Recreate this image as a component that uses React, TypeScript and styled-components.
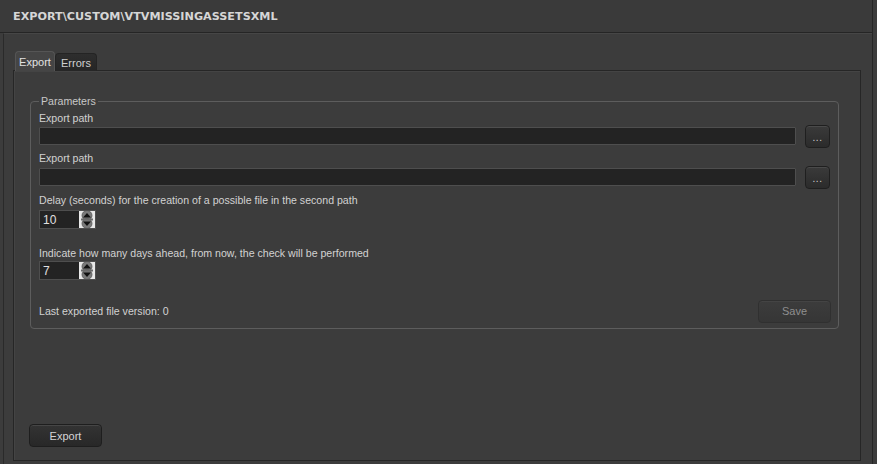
import React from "react";
import styled, { createGlobalStyle } from "styled-components";

const Global = createGlobalStyle`
  html, body { margin: 0; padding: 0; background: #3b3b3b; }
  #root { width: 877px; height: 464px; }
  * { box-sizing: border-box; }
`;

const Window = styled.div`
  width: 877px;
  height: 464px;
  display: flex;
  flex-direction: column;
  background: #3c3c3c;
  font-family: "Liberation Sans", Arial, sans-serif;
  font-size: 10.6px;
  color: #cfcfcf;
  border-right: 4px solid #3c3c3c;
  position: relative;
  &::after {
    content: "";
    position: absolute;
    top: 0;
    bottom: 0;
    right: 0;
    width: 1px;
    background: #262626;
  }
`;

const Header = styled.div`
  height: 33px;
  flex: none;
  display: flex;
  align-items: center;
  padding-left: 13px;
  border-bottom: 1px solid #252525;
  background: #3a3a3a;
  font-family: "DejaVu Sans", Verdana, sans-serif;
  font-weight: bold;
  font-size: 11.2px;
  color: #d6d6d6;
  padding-top: 1px;
`;

const Frame = styled.div`
  flex: 1;
  margin-left: 3px;
  border-left: 1px solid #2a2a2a;
  border-top: 1px solid #464646;
  padding: 17px 12px 3px 9px;
  display: flex;
  flex-direction: column;
`;

const TabBar = styled.div`
  display: flex;
  align-items: flex-end;
  height: 20px;
  padding-left: 2px;
  position: relative;
  z-index: 1;
  margin-bottom: -1px;
`;

const Tab = styled.div<{ $active?: boolean }>`
  height: ${(p) => (p.$active ? 20 : 18)}px;
  width: ${(p) => (p.$active ? 40 : 42)}px;
  display: flex;
  align-items: center;
  justify-content: center;
  border-radius: 4px 4px 0 0;
  border: 1px solid ${(p) => (p.$active ? "#555555" : "#242424")};
  border-bottom: ${(p) => (p.$active ? "none" : "1px solid #262626")};
  background: ${(p) =>
    p.$active ? "#454545" : "linear-gradient(#2e2e2e, #262626)"};
  color: ${(p) => (p.$active ? "#e2e2e2" : "#d0d0d0")};
  font-size: 11px;
  padding-top: ${(p) => (p.$active ? 0 : 1)}px;
`;

const Panel = styled.div`
  flex: 1;
  border: 1px solid #262626;
  box-shadow: inset 1px 1px 0 #444444;
  padding: 14px 21px 13px 16px;
  display: flex;
  flex-direction: column;
`;

const Group = styled.div`
  margin-top: 16px;
  border: 1px solid #5d5d5d;
  border-radius: 4px;
  padding: 10px 7px 6px 8px;
  position: relative;
  display: flex;
  flex-direction: column;
`;

const Legend = styled.span`
  position: absolute;
  top: -8px;
  left: 8px;
  padding: 0 2px;
  background: #3c3c3c;
  color: #c8c8c8;
  line-height: 14px;
`;

const Label = styled.div<{ $mt?: number }>`
  line-height: 13px;
  margin-top: ${(p) => p.$mt ?? 0}px;
  color: #d2d2d2;
  white-space: nowrap;
`;

const PathRow = styled.div<{ $mt?: number }>`
  display: flex;
  align-items: center;
  height: 18px;
  margin-top: ${(p) => p.$mt ?? 0}px;
  gap: 9px;
`;

const PathInput = styled.div`
  flex: 1;
  height: 18px;
  background: #232323;
  border: 1px solid #4e4e4e;
  border-radius: 1px;
`;

const DotsButton = styled.div`
  width: 25px;
  height: 23px;
  flex: none;
  margin-right: 1px;
  border-radius: 4px;
  border: 1px solid #1f1f1f;
  background: linear-gradient(#3a3a3a, #2b2b2b);
  box-shadow: inset 0 1px 0 #4a4a4a;
  color: #d0d0d0;
  display: flex;
  align-items: center;
  justify-content: center;
  font-size: 10px;
  letter-spacing: 0.5px;
  padding-top: 2px;
`;

const Spin = styled.div<{ $mt?: number }>`
  width: 57px;
  height: 19px;
  margin-top: ${(p) => p.$mt ?? 0}px;
  background: #232323;
  border: 1px solid #4e4e4e;
  display: flex;
  align-items: center;
  justify-content: space-between;
  padding-left: 3px;
  color: #e0e0e0;
  font-size: 12px;
`;

const SpinArrows = () => (
  <svg width="16" height="17" viewBox="0 0 16 17">
    <rect width="16" height="17" fill="#e8e8e8" />
    <circle cx="8" cy="4.5" r="5" fill="#7a7a7a" stroke="#555" strokeWidth="0.8" />
    <circle cx="8" cy="12.5" r="5" fill="#7a7a7a" stroke="#555" strokeWidth="0.8" />
    <rect x="2" y="7.5" width="12" height="2" fill="#6a6a6a" />
    <polygon points="4,6.5 12,6.5 8,2" fill="#111" />
    <polygon points="4,10.5 12,10.5 8,15" fill="#111" />
  </svg>
);

const FooterRow = styled.div`
  display: flex;
  align-items: center;
  justify-content: space-between;
  height: 22px;
  margin-top: 20px;
`;

const Button = styled.div<{ $disabled?: boolean }>`
  width: 73px;
  height: 23px;
  border-radius: 4px;
  display: flex;
  align-items: center;
  justify-content: center;
  font-size: 11px;
  border: 1px solid ${(p) => (p.$disabled ? "#303030" : "#1e1e1e")};
  background: ${(p) =>
    p.$disabled ? "linear-gradient(#3c3c3c, #363636)" : "linear-gradient(#333333, #282828)"};
  box-shadow: inset 0 1px 0 ${(p) => (p.$disabled ? "#444" : "#464646")};
  color: ${(p) => (p.$disabled ? "#8f8f8f" : "#d4d4d4")};
`;

const BottomBar = styled.div`
  margin-top: auto;
  margin-left: -1px;
`;

export default function App() {
  return (
    <>
      <Global />
      <Window>
        <Header>EXPORT\CUSTOM\VTVMISSINGASSETSXML</Header>
        <Frame>
          <TabBar>
            <Tab $active>Export</Tab>
            <Tab>Errors</Tab>
          </TabBar>
          <Panel>
            <Group>
              <Legend>Parameters</Legend>
              <Label>Export path</Label>
              <PathRow $mt={2}>
                <PathInput />
                <DotsButton>...</DotsButton>
              </PathRow>
              <Label $mt={7}>Export path</Label>
              <PathRow $mt={3}>
                <PathInput />
                <DotsButton>...</DotsButton>
              </PathRow>
              <Label $mt={8}>Delay (seconds) for the creation of a possible file in the second path</Label>
              <Spin $mt={3}>
                <span>10</span>
                <SpinArrows />
              </Spin>
              <Label $mt={18}>Indicate how many days ahead, from now, the check will be performed</Label>
              <Spin $mt={1}>
                <span>7</span>
                <SpinArrows />
              </Spin>
              <FooterRow>
                <Label>Last exported file version: 0</Label>
                <Button $disabled>Save</Button>
              </FooterRow>
            </Group>
            <BottomBar>
              <Button>Export</Button>
            </BottomBar>
          </Panel>
        </Frame>
      </Window>
    </>
  );
}
